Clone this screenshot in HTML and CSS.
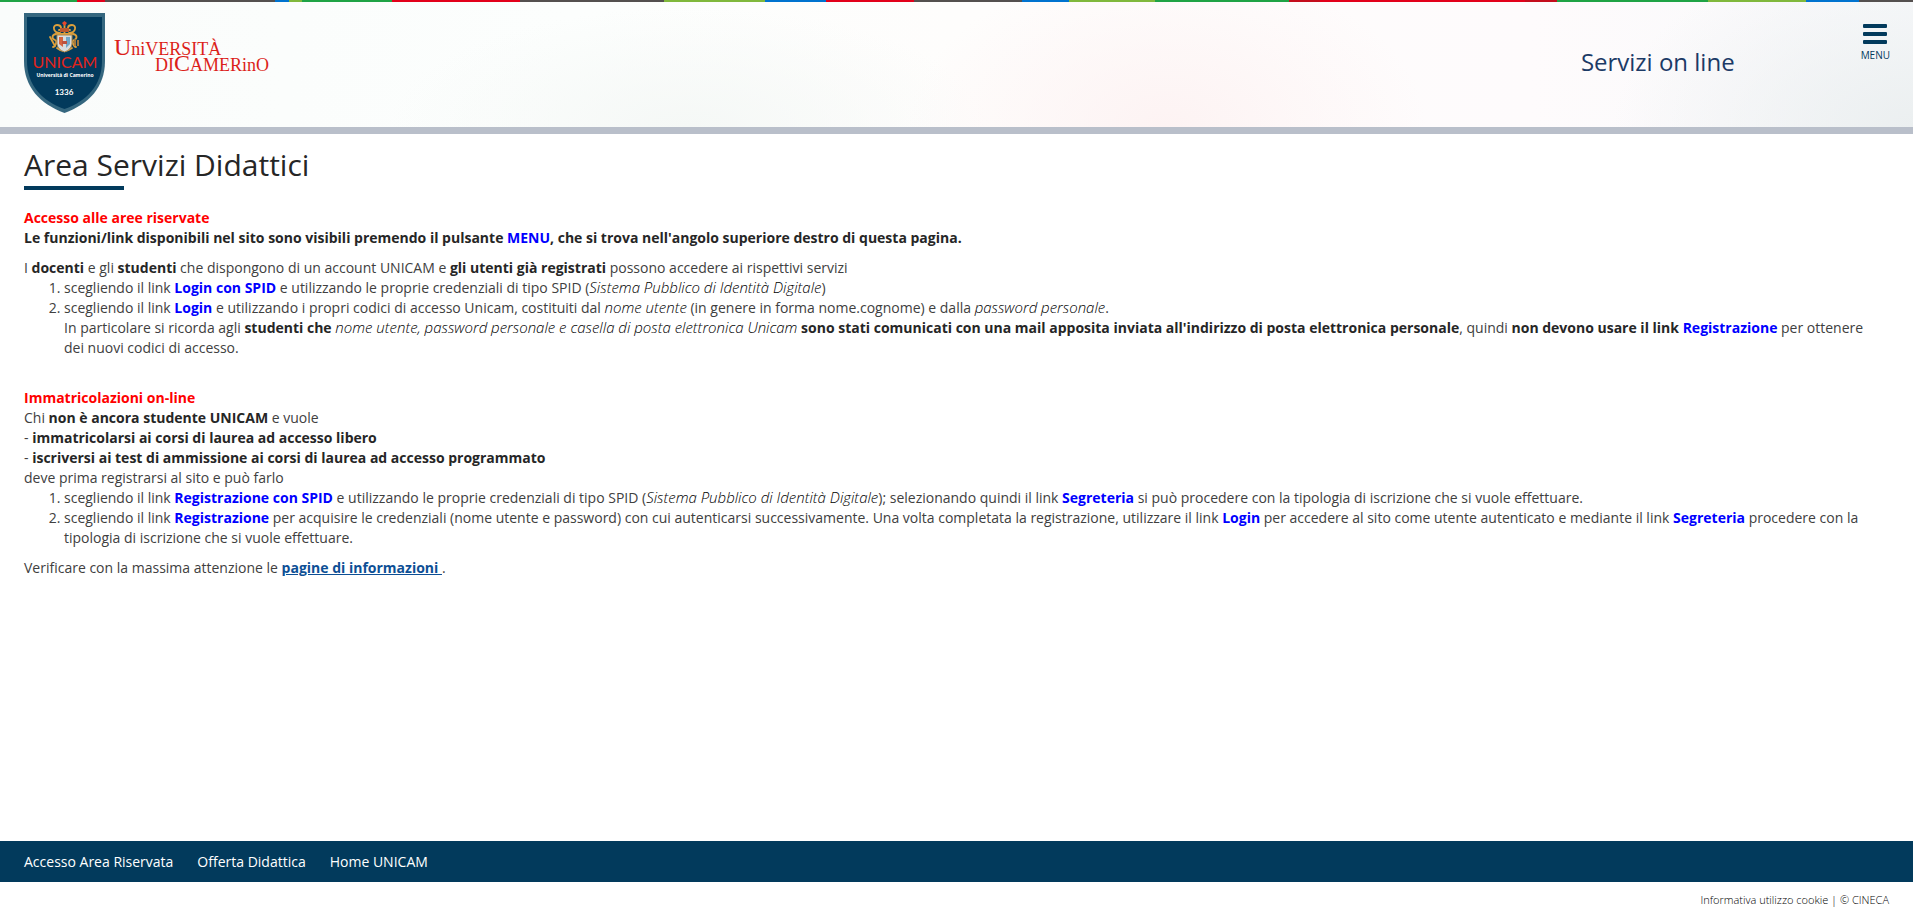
FILE: index.html
```html
<!DOCTYPE html>
<html lang="it">
<head>
<meta charset="utf-8">
<meta name="viewport" content="width=device-width, initial-scale=1">
<title>Area Servizi Didattici</title>
<link rel="stylesheet" href="styles.css">
</head>
<body class="page">
<header class="header">
  <a class="brand" href="#" aria-label="Università di Camerino">
    <svg class="logo" width="248" height="102" viewBox="0 0 248 102" role="img" aria-label="UNICAM">
      <path d="M0 0H81V48C81 74 65 91 40.500 100C16 91 0 74 0 48Z" fill="#35677f"/>
      <path d="M3 4H78V48C78 72 63 88 40.500 96C18 88 3 72 3 48Z" fill="#023a5c"/>
      <g fill="none" stroke="#dda03c" stroke-width="1.800" stroke-linecap="round">
        <path d="M36 20C29 20 28 12 33 12S38 17 35 17M45 20C52 20 53 12 48 12S43 17 46 17"/>
        <path d="M32 21C27 22 28 26 31 27S31 34 29 34M49 21C54 22 53 26 50 27S50 34 52 34"/>
        <path d="M33 21H48M40.500 11V20M26 24L31 33M33 35Q40 41 48 35"/>
      </g>
      <path d="M51 26V33M54 27V33" stroke="#a5793c" stroke-width="2"/>
      <path d="M38 10L40.500 8L43 10L40.500 13Z" fill="#e6472c"/>
      <path d="M36 15H45V19H36Z" fill="#b9572f"/>
      <path d="M33 22H48V31Q47 37 40.500 39Q34 37 33 31Z" fill="#d8dde0" stroke="#a9854b"/>
      <path d="M35 24H39V34L35 31Z" fill="#d6633e"/><path d="M42 24H46V31L42 35Z" fill="#6fa6c8"/>
      <path d="M38 28H43V31H38Z" fill="#bb5140"/>
      <text class="logo-name" x="41" y="55" text-anchor="middle">UNICAM</text>
      <text class="logo-sub" x="41" y="64" text-anchor="middle">Università di Camerino</text>
      <text class="logo-year" x="40" y="82" text-anchor="middle">1336</text>
      <text class="wordmark" x="90" y="42"><tspan class="cap">U</tspan>niVERSITÀ</text>
      <text class="wordmark" x="131" y="58">DI<tspan class="cap">C</tspan>AMERinO</text>
    </svg>
  </a>
  <div class="service">Servizi on line</div>
  <button class="menu" type="button">
    <svg width="24" height="20" viewBox="0 0 24 20" aria-hidden="true"><path d="M1 0H23a1 1 0 0 1 1 1V3a1 1 0 0 1-1 1H1a1 1 0 0 1-1-1V1a1 1 0 0 1 1-1ZM1 8H23a1 1 0 0 1 1 1V11a1 1 0 0 1-1 1H1a1 1 0 0 1-1-1V9a1 1 0 0 1 1-1ZM1 16H23a1 1 0 0 1 1 1V19a1 1 0 0 1-1 1H1a1 1 0 0 1-1-1V17a1 1 0 0 1 1-1Z" fill="#023a5c"/></svg>
    <span>MENU</span>
  </button>
</header>
<main class="main">
  <h1 class="title">Area Servizi Didattici</h1>
  <section class="block">
    <h2 class="heading">Accesso alle aree riservate</h2>
    <p class="lead"><b>Le funzioni/link disponibili nel sito sono visibili premendo il pulsante <span class="key">MENU</span>, che si trova nell'angolo superiore destro di questa pagina.</b></p>
    <p>I <b>docenti</b> e gli <b>studenti</b> che dispongono di un account UNICAM e <b>gli utenti già registrati</b> possono accedere ai rispettivi servizi</p>
    <ol class="steps">
      <li>scegliendo il link <b class="key">Login con SPID</b> e utilizzando le proprie credenziali di tipo SPID (<i>Sistema Pubblico di Identità Digitale</i>)</li>
      <li>scegliendo il link <b class="key">Login</b> e utilizzando i propri codici di accesso Unicam, costituiti dal <i>nome utente</i> (in genere in forma nome.cognome) e dalla <i>password personale</i>.<br>In particolare si ricorda agli <b>studenti che</b> <i>nome utente, password personale e casella di posta elettronica Unicam</i> <b>sono stati comunicati con una mail apposita inviata all'indirizzo di posta elettronica personale</b>, quindi <b>non devono usare il link <span class="key">Registrazione</span></b> per ottenere dei nuovi codici di accesso.</li>
    </ol>
  </section>
  <section class="block">
    <h2 class="heading">Immatricolazioni on-line</h2>
    <p>Chi <b>non è ancora studente UNICAM</b> e vuole<br>- <b>immatricolarsi ai corsi di laurea ad accesso libero</b><br>- <b>iscriversi ai test di ammissione ai corsi di laurea ad accesso programmato</b><br>deve prima registrarsi al sito e può farlo</p>
    <ol class="steps">
      <li>scegliendo il link <b class="key">Registrazione con SPID</b> e utilizzando le proprie credenziali di tipo SPID (<i>Sistema Pubblico di Identità Digitale</i>); selezionando quindi il link <b class="key">Segreteria</b> si può procedere con la tipologia di iscrizione che si vuole effettuare.</li>
      <li>scegliendo il link <b class="key">Registrazione</b> per acquisire le credenziali (nome utente e password) con cui autenticarsi successivamente. Una volta completata la registrazione, utilizzare il link <b class="key">Login</b> per accedere al sito come utente autenticato e mediante il link <b class="key">Segreteria</b> procedere con la tipologia di iscrizione che si vuole effettuare.</li>
    </ol>
    <p class="note">Verificare con la massima attenzione le <a class="info" href="#">pagine di informazioni&nbsp;</a>.</p>
  </section>
</main>
<footer class="footer">
  <nav class="links"><a href="#">Accesso Area Riservata</a><a href="#">Offerta Didattica</a><a href="#">Home UNICAM</a></nav>
  <div class="legal"><a href="#">Informativa utilizzo cookie</a> | <a href="#">© CINECA</a></div>
</footer>
</body>
</html>
```

FILE: styles.css
```css
* { box-sizing: border-box; }
.page { margin: 0; min-height: 100vh; display: flex; flex-direction: column; font: 400 14px/20px "Open Sans", sans-serif; color: #404040; background: #fff; }
.header {
  display: flex; align-items: flex-start; padding: 13px 23px 12px 24px; border-bottom: 7px solid #b9bfca;
  background:
    linear-gradient(90deg, #1fa345 4%, #e2001a 4% 5.5%, #54504f 5.5% 14.4%, #0073cf 14.4% 15.1%, #80b83c 15.1% 15.8%, #1fa345 15.8% 20.5%, #e2001a 20.5% 27.2%, #54504f 27.2% 34.7%, #80b83c 34.7% 40%, #0073cf 40% 43.2%, #e2001a 43.2% 47.8%, #54504f 47.8% 53.4%, #0073cf 53.4% 55.9%, #80b83c 55.9% 60.4%, #1fa345 60.4% 67.4%, #c40d1c 67.4% 69%, #e2001a 69% 79.7%, #c40d1c 79.7% 81.4%, #1fa345 81.4% 89.3%, #80b83c 89.3% 94.4%, #0073cf 94.4% 97.2%, #54504f 97.2%) 0 0 / 100% 2px no-repeat,
    radial-gradient(300px 180px at 100% 100%, #ebeff0, transparent),
    radial-gradient(260px 160px at 61% 100%, #fdf3f3, transparent),
    radial-gradient(300px 120px at 36% 100%, #f5f8f6, transparent),
    linear-gradient(90deg, #fafcfb, #fcfefd 30%, #fefdfc 50%, #fefbfc 80%, #f8f9fb);
}
.brand { display: block; }
.logo { display: block; }
.logo-name { font: 16px "Lato", sans-serif; fill: #e2231a; }
.logo-sub { font: 700 5px "Noto Sans", sans-serif; fill: #fff; }
.logo-year { font: 700 8px "Lato", sans-serif; fill: #fff; }
.wordmark { font: 18px "Liberation Serif", serif; fill: #dc1f1a; }
.cap { font-size: 24px; }
.service { margin: 31px 126px 0 auto; font-size: 24px; font-weight: 400; line-height: 36px; color: #1c3a66; }
.menu { display: flex; flex-direction: column; align-items: center; gap: 3px; margin-top: 11px; padding: 0; border: 0; background: none; font: 400 10px/16px "Open Sans", sans-serif; color: #023a5c; cursor: pointer; }
.main { flex: 1; padding: 11px 32px 0 24px; }
.title { margin: 0 0 18px; font-size: 30px; font-weight: 400; line-height: 40px; color: #262626; }
.title::after { content: ""; display: block; width: 100px; height: 4px; margin-top: 1px; background: #023a5c; }
.block { margin-bottom: 30px; }
.heading { margin: 0; font-size: 14px; line-height: 20px; font-weight: 700; color: #f00; }
.block p { margin: 0; }
.block .lead { margin-bottom: 10px; }
.block .note { margin-top: 10px; }
.page b { font-weight: 700; color: #262626; }
.page i { font-size: 15px; font-weight: 300; line-height: 1; color: #000; }
.page .key { color: #00f; }
.steps { margin: 0; padding-left: 40px; }
.info { color: #0d4f95; font-weight: 700; }
.links { display: flex; gap: 24px; padding: 11px 24px 10px; background: #023a5c; font-weight: 400; }
.links a { color: #fff; text-decoration: none; }
.legal { padding: 8px 24px 13px; text-align: right; font-size: 11px; font-weight: 300; line-height: 20px; color: #000; }
.legal a { color: inherit; text-decoration: none; }
```
